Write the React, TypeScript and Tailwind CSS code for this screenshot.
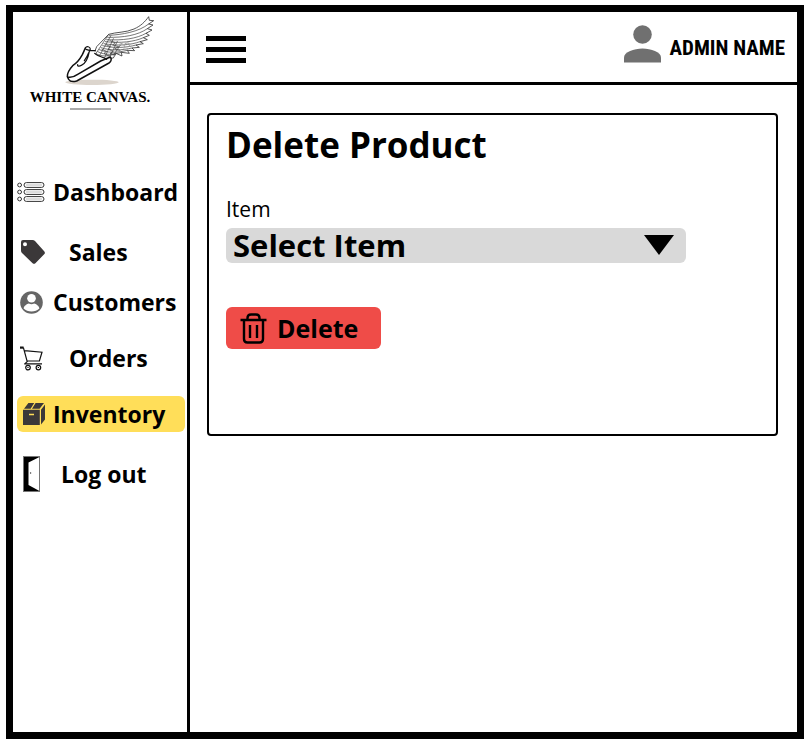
import type { ReactNode } from "react";

function LogoMark() {
  return (
    <svg viewBox="-120 6 420 225" className="h-[75px] w-[140px]" fill="none" stroke="#111" strokeLinecap="round" strokeLinejoin="round" aria-hidden="true">
      <ellipse cx="96" cy="217" rx="80" ry="8" fill="#dcd5cd" stroke="none" />
      <path
        d="M103 128 L110 110 L146 73 C168 66 198 68 222 57 C244 47 254 36 266 20 L268 31 L281 32 L266 42 L279 45 L262 56 L276 60 L258 70 L268 76 L250 83 L262 89 L240 95 L250 101 L228 105 L238 112 L216 114 L224 122 L202 121 L208 130 L184 127 L186 138 L168 130 L160 144 L138 146 L120 144 L100 137 Z"
        fill="#fff"
        stroke="#333"
        strokeWidth="2.5"
      />
      <g stroke="#444" strokeWidth="2.2">
        <path d="M148 76C185 74 236 66 266 42M143 82C190 83 234 76 262 56M140 89C188 92 230 86 258 70M136 95C180 100 222 96 250 83M132 101C170 108 210 106 240 95M128 107C162 115 196 114 228 105M123 113C154 123 184 121 216 114M118 119C144 130 172 128 202 121M113 125C136 136 160 135 184 127M108 131C126 141 146 140 168 130" />
        <path d="M146 73L106 133M152 78L118 138M160 86L134 143M172 94L148 143M184 101L160 136M150 92L166 98L158 105L176 110L164 117L180 121M138 104L152 110L144 118L160 124L150 131L166 134M126 118L140 124L132 130L146 138" />
      </g>
      <path d="M178 104C188 98 198 108 192 114M196 100C204 96 212 102 208 108" stroke="#aaa" strokeWidth="4" />
      <path
        d="M76 114C73 121 71 126 67 134C59 149 46 162 38 167C28 178 21 188 22 200L26 208C31 216 39 216 50 213L147 159C155 154 155 146 151 141L122 153L53 193C43 200 30 203 23 201"
        fill="#fff"
        stroke="none"
      />
      <path
        d="M104 122L106 134C116 142 132 141 140 148L122 153L70 150L86 122Z"
        fill="#fff"
        stroke="none"
      />
      <path d="M76 114C73 121 71 126 67 134C59 149 46 162 38 167C28 178 21 188 22 200L26 208C31 216 39 216 50 213L147 159C155 154 155 146 151 141L122 153L53 193C43 200 30 203 23 201" strokeWidth="4.5" />
      <path d="M76 114C80 107 90 110 91 117L88 124C84 146 76 161 64 166C58 170 51 169 53 164M78 118L88 121M90 122L106 122M86 128C82 139 77 146 73 152M104 130C114 140 132 141 140 148" strokeWidth="3.6" />
    </svg>
  );
}

function DashboardIcon() {
  return (
    <svg viewBox="0 0 28 20" className="h-5 w-7" fill="#fff" stroke="#333" strokeWidth="1">
      {[3, 10, 17].map((y) => (
        <g key={y}>
          <circle cx="2.6" cy={y} r="1.9" />
          <rect x="7" y={y - 2.4} width="20" height="4.8" rx="2.4" />
          <path d={`M9 ${y}H25`} stroke="#bbb" />
        </g>
      ))}
    </svg>
  );
}

function TagIcon() {
  return (
    <svg viewBox="0 0 24 24" className="h-6 w-6" fill="#3b3839">
      <path fillRule="evenodd" d="M2 0H11.5Q13 0 14 1L23.4 11.6Q24.4 13 23.4 14L14.4 23.2Q13 24.4 11.6 23.2L1 13Q0 12 0 10.5V2Q0 0 2 0ZM4 2.2A2 2 0 1 0 4 6.2A2 2 0 1 0 4 2.2Z" />
    </svg>
  );
}

function CustomerIcon() {
  return (
    <svg viewBox="0 0 23 23" className="h-[23px] w-[23px]">
      <circle cx="11.5" cy="11.5" r="11.3" fill="#666" />
      <circle cx="11.5" cy="7.2" r="4.3" fill="#fff" />
      <path d="M3.6 17.6C4 14.4 7 13 8.8 12.4Q11.5 14 14.2 12.4C16 13 19 14.4 19.4 17.6Q16.3 20.6 11.5 20.6T3.6 17.6Z" fill="#fff" />
    </svg>
  );
}

function CartIcon() {
  return (
    <svg viewBox="0 0 23 25" className="h-[25px] w-[23px]" fill="none" stroke="#111" strokeWidth="1.2">
      <path d="M0 1.6H3.6" strokeWidth="2.2" />
      <path d="M3.4 1.6L7.2 15.6L5 17.6M4.4 4.6L22 6.2L19.4 15H7M4.2 17.8H22" />
      <circle cx="8" cy="21.6" r="2.3" />
      <circle cx="18.4" cy="21.6" r="2.3" />
      <path d="M8 21.1V22.1M18.4 21.1V22.1" />
    </svg>
  );
}

function BoxIcon() {
  return (
    <svg viewBox="0 0 22 22" className="h-[22px] w-[22px]" fill="#3b3839">
      <path d="M0 6.8H16.8V22H0ZM1 5.8L5.4 0H11.2L7.6 5.8ZM9 5.8L12.6 0H21L16.6 5.8ZM18 6.8L22 1.4V16.4L18 21.4Z" />
      <path d="M6 11.5H11" stroke="#ffde59" strokeWidth="1.5" />
    </svg>
  );
}

function DoorIcon() {
  return (
    <svg viewBox="0 0 17 36" className="h-9 w-[17px]">
      <rect x="0.5" y="0.5" width="16" height="35" fill="#000" stroke="#777" />
      <path d="M16 1.2L5.5 6.6V29L16 34.8Z" fill="#fff" />
      <circle cx="7.6" cy="17" r="0.7" fill="#333" />
    </svg>
  );
}

function UserIcon() {
  return (
    <svg viewBox="0 0 37 38" className="h-[38px] w-[37px]" fill="#707070" aria-hidden="true">
      <circle cx="18.5" cy="9.5" r="9.3" />
      <path d="M0 37.5V32.5C0 27 10 23.5 18.5 23.5S37 27 37 32.5V37.5Z" />
    </svg>
  );
}

function TrashIcon() {
  return (
    <svg viewBox="0 0 27 31" className="h-[31px] w-[27px]" fill="none" stroke="#000" strokeWidth="2.4" strokeLinejoin="round" aria-hidden="true">
      <path d="M0.5 7H26.5M7.5 7V5Q7.5 1.5 11 1.5H16Q19.5 1.5 19.5 5V7M4 7V26Q4 29.5 7.5 29.5H19.5Q23 29.5 23 26V7M10 12V25M17 12V25" />
    </svg>
  );
}

type NavItem = { label: string; icon: ReactNode; row: string; align: string; text: string };

const items: NavItem[] = [
  { label: "Dashboard", icon: <DashboardIcon />, row: "", align: "justify-center", text: "" },
  { label: "Sales", icon: <TagIcon />, row: "mt-6", align: "justify-end", text: "ml-4" },
  { label: "Customers", icon: <CustomerIcon />, row: "mt-[14px]", align: "justify-center", text: "" },
  { label: "Orders", icon: <CartIcon />, row: "mt-5", align: "justify-center", text: "ml-4" },
  { label: "Inventory", icon: <BoxIcon />, row: "mt-5 bg-[#ffde59]", align: "justify-end", text: "" },
  { label: "Log out", icon: <DoorIcon />, row: "mt-6", align: "justify-center", text: "ml-2" },
];

function Sidebar() {
  return (
    <aside className="w-[177px] shrink-0 border-r-[3px] border-black">
      <div className="flex flex-col items-center pr-5">
        <LogoMark />
        <p className="mt-[2px] whitespace-nowrap font-['Liberation_Serif',serif] text-[15px] leading-4 font-bold">WHITE CANVAS.</p>
        <div className="mt-[3px] h-[2px] w-[41px] bg-[#aaa]" />
      </div>
      <nav className="mt-16 pr-[2px] pl-1">
        {items.map((item) => (
          <a
            key={item.label}
            href="#"
            aria-current={item.label === "Inventory" ? "page" : undefined}
            className={`flex h-9 items-center gap-2 rounded-md text-[23px] leading-none font-bold ${item.row}`}
          >
            <span className={`flex w-7 shrink-0 ${item.align}`} aria-hidden="true">{item.icon}</span>
            <span className={`whitespace-nowrap ${item.text}`}>{item.label}</span>
          </a>
        ))}
      </nav>
    </aside>
  );
}

export default function App() {
  return (
    <div className="h-screen bg-white pt-[5px] pr-[7px] pb-[7px] pl-[6px] font-['Open_Sans',sans-serif] text-black">
      <div className="flex h-full border-[7px] border-black">
        <Sidebar />
        <div className="min-w-0 flex-1">
          <header className="flex h-[73px] items-center justify-between border-b-[3px] border-black pr-3 pl-4">
            <button type="button" aria-label="Menu" className="flex w-10 flex-col gap-[6px] pt-1">
              <span className="h-[5px] w-full bg-black" />
              <span className="h-[5px] w-full bg-black" />
              <span className="h-[5px] w-full bg-black" />
            </button>
            <div className="flex items-center gap-2 pt-[2px]">
              <div className="pb-2">
                <UserIcon />
              </div>
              <span className="font-['Liberation_Sans_Narrow','Roboto_Condensed','Open_Sans',sans-serif] text-[21px] leading-none font-bold whitespace-nowrap">ADMIN NAME</span>
            </div>
          </header>
          <main className="pt-7 pr-[19px] pl-[17px]">
            <section className="rounded border-2 border-black px-[17px] pt-[10px] pb-[85px]">
              <h1 className="text-[35px] leading-10 font-bold">Delete Product</h1>
              <label htmlFor="item" className="mt-[30px] block text-[21px] leading-7">Item</label>
              <div className="relative mt-[5px] max-w-[460px]">
                <select id="item" className="block h-[35px] w-full appearance-none rounded-md bg-[#d9d9d9] pr-12 pl-[7px] text-[31px] leading-[35px] font-bold">
                  <option>Select Item</option>
                </select>
                <svg viewBox="0 0 30 20" className="pointer-events-none absolute top-[7px] right-3 h-5 w-[30px]" aria-hidden="true">
                  <path d="M0 0H30L15 20Z" />
                </svg>
              </div>
              <button type="button" className="mt-11 flex h-[42px] w-[155px] items-center gap-[10px] rounded-md bg-[#ef4c48] pl-[14px] text-[25px] leading-none font-bold">
                <TrashIcon />
                Delete
              </button>
            </section>
          </main>
        </div>
      </div>
    </div>
  );
}
